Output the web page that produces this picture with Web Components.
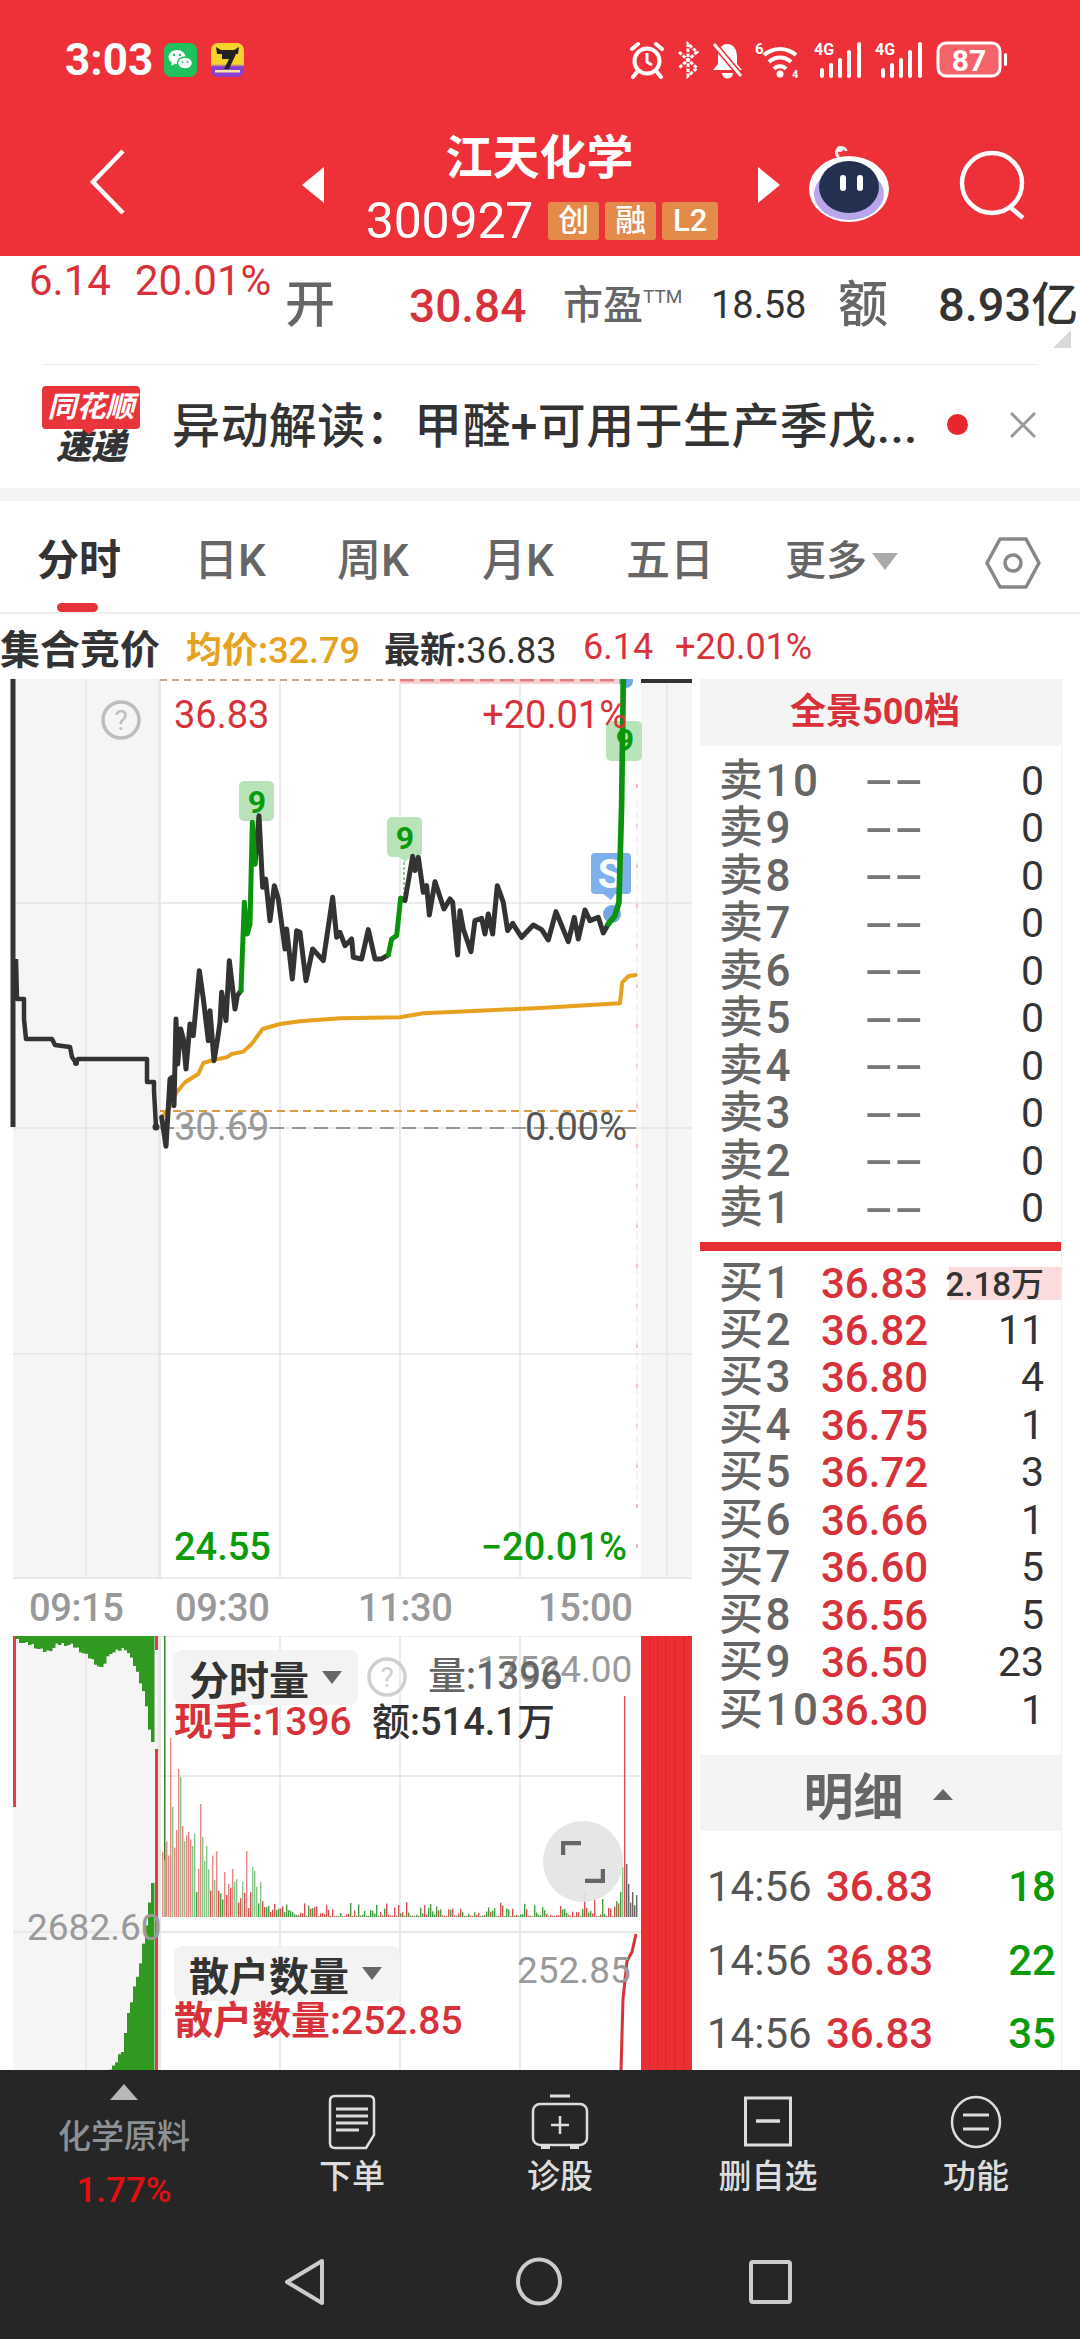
<!DOCTYPE html>
<html lang="zh-CN">
<head>
<meta charset="utf-8">
<style>
  html, body { margin: 0; padding: 0; background: #fff; }
  body {
    width: 1080px;
    height: 2340px;
    overflow: hidden;
    font-family: Roboto, "Noto Sans CJK SC", sans-serif;
    color: #333;
    display: flex;
    flex-direction: column;
  }
  .main { display: flex; height: 1391px; }
</style>
</head>
<body>
  <stock-header></stock-header>
  <quote-strip></quote-strip>
  <news-row></news-row>
  <period-tabs></period-tabs>
  <chart-info></chart-info>
  <div class="main">
    <time-chart></time-chart>
    <order-book></order-book>
  </div>
  <bottom-bar></bottom-bar>

<script>
class StatusBar extends HTMLElement {
  constructor() {
    super();
    this.attachShadow({ mode: 'open' });
  }

  connectedCallback() {
    this.shadowRoot.innerHTML = `
      <style>
        :host { display: flex; align-items: center; height: 120px; padding: 0 72px 0 65px; color: #fff; }
        .time { font-size: 44px; font-weight: 700; width: 88px; letter-spacing: 0; }
        .left { display: flex; align-items: center; gap: 14px; }
        .left .time { margin-right: -3px; }
        .right { margin-left: auto; display: flex; align-items: center; gap: 11px; }
        svg { display: block; }
        text { font-family: Roboto, sans-serif; font-weight: 700; fill: #fff; }
      </style>
      <div class="left">
        <span class="time">3:03</span>
        <svg width="33" height="34" viewBox="0 0 33 34">
          <rect width="33" height="34" rx="7" fill="#1fc15c"/>
          <ellipse cx="13" cy="14" rx="8.5" ry="7" fill="#fff"/>
          <ellipse cx="21" cy="20" rx="7.5" ry="6" fill="#fff" stroke="#1fc15c" stroke-width="1.5"/>
          <path d="M8 19l-1 4 4-2z" fill="#fff"/>
          <circle cx="10" cy="12" r="1.2" fill="#1fc15c"/><circle cx="16" cy="12" r="1.2" fill="#1fc15c"/>
          <circle cx="18.5" cy="19" r="1" fill="#1fc15c"/><circle cx="23.5" cy="19" r="1" fill="#1fc15c"/>
        </svg>
        <svg width="33" height="34" viewBox="0 0 33 34">
          <defs><linearGradient id="ap" x1="0" y1="0" x2="0" y2="1"><stop offset=".62" stop-color="#f8d22c"/><stop offset=".7" stop-color="#8a3fd0"/></linearGradient></defs>
          <rect width="33" height="34" rx="7" fill="url(#ap)"/>
          <path d="M5 4l5 3h13l5-3-1 7H6z" fill="#222"/>
          <path d="M11 11h14l-7 15h-5l5-10h-7z" fill="#222"/>
          <rect x="4" y="27" width="25" height="2.5" fill="#f3e3a0"/>
        </svg>
      </div>
      <div class="right">
        <svg width="36" height="38" viewBox="0 0 36 38" fill="none" stroke="#fff" stroke-width="4">
          <circle cx="18" cy="20" r="12.5"/><path d="M18 12v9l5 3" stroke-width="3"/>
          <path d="M3 8l6-5M33 8l-6-5M8 31l-4 5M28 31l4 5" stroke-linecap="round"/>
        </svg>
        <svg width="24" height="38" viewBox="0 0 24 38" fill="none" stroke="#fff" stroke-width="3">
          <path d="M3 11l18 16-9 8V3l9 8L3 27" stroke-dasharray="3.5 1.5"/>
        </svg>
        <svg width="33" height="38" viewBox="0 0 33 38" fill="#fff">
          <path d="M16 3c7 0 10 6 10 13v7l5 6H2l5-6v-7C7 9 10 3 16 3z"/>
          <path d="M11 32h11a5.5 5.5 0 0 1-11 0z"/>
          <path d="M3 3l27 32" stroke="#ee3039" stroke-width="6"/>
          <path d="M3 3l27 32" stroke="#fff" stroke-width="3"/>
        </svg>
        <svg width="48" height="38" viewBox="0 0 48 38" fill="none" stroke="#fff" stroke-width="4">
          <text x="0" y="13" font-size="15" stroke="none">6</text>
          <path d="M9 14a24 24 0 0 1 32 0M14 21a16 16 0 0 1 22 0M19 28a8 8 0 0 1 12 0"/>
          <circle cx="25" cy="33" r="3.5" fill="#fff" stroke="none"/>
          <text x="37" y="37" font-size="11" stroke="none">4</text>
        </svg>
        <signal-mark></signal-mark>
        <signal-mark></signal-mark>
        <svg width="72" height="38" viewBox="0 0 72 38">
          <rect x="2" y="2" width="62" height="33" rx="8" fill="#f4636a" stroke="#fff" stroke-width="3"/>
          <text x="33" y="30" font-size="30" text-anchor="middle">87</text>
          <rect x="68" y="12" width="3" height="13" rx="1.5" fill="#fff"/>
        </svg>
      </div>
    `;
  }
}

class SignalMark extends HTMLElement {
  constructor() {
    super();
    this.attachShadow({ mode: 'open' });
  }

  connectedCallback() {
    this.shadowRoot.innerHTML = `
      <style>
        :host { display: block; }
        svg { display: block; }
        text { font-family: Roboto, sans-serif; font-weight: 700; fill: #fff; }
      </style>
      <svg width="50" height="38" viewBox="0 0 50 38" fill="#fff">
        <text x="0" y="14" font-size="16">4G</text>
        <rect x="6" y="27" width="4" height="10" rx="2"/>
        <rect x="15" y="22" width="4" height="15" rx="2"/>
        <rect x="24" y="17" width="4" height="20" rx="2"/>
        <rect x="33" y="9" width="4" height="28" rx="2"/>
        <rect x="43" y="1" width="4" height="36" rx="2"/>
      </svg>
    `;
  }
}

class StockHeader extends HTMLElement {
  constructor() {
    super();
    this.attachShadow({ mode: 'open' });
  }

  connectedCallback() {
    this.shadowRoot.innerHTML = `
      <style>
        :host { display: block; height: 256px; background: #ee3039; color: #fff; }
        .nav { display: flex; height: 136px; padding-left: 88px; }
        svg { display: block; }
        .back { margin-top: 29px; }
        .prev { margin: 47px 0 0 175px; }
        .next { margin: 47px 0 0 0; }
        .name { width: 432px; display: flex; flex-direction: column; align-items: center; }
        .title { font-size: 47px; font-weight: 700; line-height: 50px; margin-top: 13px; padding-right: 3px; }
        .code { display: flex; align-items: center; height: 40px; margin-top: 18px; padding-left: 2px; }
        .num { font-size: 50px; line-height: 40px; letter-spacing: -.2px; }
        .tags { display: flex; gap: 6px; margin-left: 15px; }
        .tag { width: 51px; height: 38px; border-radius: 3px; background: #e28b4b; font-size: 31px; font-weight: 500; line-height: 38px; text-align: center; }
        .tag.wide { width: 56px; }
        .robot { margin: 24px 0 0 26px; }
        .search { margin: 30px 0 0 68px; }
      </style>
      <status-bar></status-bar>
      <div class="nav">
        <svg class="back" width="38" height="66" viewBox="0 0 38 66" fill="none" stroke="#fff" stroke-width="4.5"><path d="M35 2L5 33l30 31"/></svg>
        <svg class="prev" width="24" height="36" viewBox="0 0 24 36" fill="#fff"><path d="M23 0v36L1 18z"/></svg>
        <div class="name">
          <div class="title">江天化学</div>
          <div class="code">
            <span class="num">300927</span>
            <div class="tags">
              <span class="tag">创</span><span class="tag">融</span><span class="tag wide">L2</span>
            </div>
          </div>
        </div>
        <svg class="next" width="24" height="36" viewBox="0 0 24 36" fill="#fff"><path d="M1 0v36l22-18z"/></svg>
        <svg class="robot" width="84" height="78" viewBox="0 0 84 78">
          <path d="M32 13c-4-2-3-8 1-9 3-1 6 1 6 3" fill="none" stroke="#f3e8ef" stroke-width="3"/>
          <circle cx="33" cy="5" r="3" fill="#fff"/>
          <ellipse cx="42" cy="45" rx="40" ry="33" fill="#fff"/>
          <ellipse cx="42" cy="50" rx="35" ry="26" fill="#b9a6ea"/>
          <ellipse cx="42" cy="43" rx="30" ry="26" fill="#24304f"/>
          <rect x="33" y="31" width="6" height="16" rx="3" fill="#fff"/>
          <rect x="50" y="31" width="6" height="16" rx="3" fill="#fff"/>
        </svg>
        <svg class="search" width="68" height="70" viewBox="0 0 68 70" fill="none" stroke="#fff" stroke-width="4.5">
          <circle cx="33" cy="33" r="30"/><path d="M50 56l14 12"/>
        </svg>
      </div>
    `;
  }
}

class QuoteStrip extends HTMLElement {
  constructor() {
    super();
    this.attachShadow({ mode: 'open' });
  }

  connectedCallback() {
    this.shadowRoot.innerHTML = `
      <style>
        :host { display: block; position: relative; height: 109px; overflow: hidden; background: #fff; }
        .row {
          display: grid; grid-template-columns: 106px 152px 122px 154px 148px 129px 98px 142px;
          padding-left: 29px; height: 108px; align-items: start; white-space: nowrap;
        }
        .chg { font-size: 42px; line-height: 48px; color: #d8313a; margin-top: 1px; }
        .k { font-size: 40px; line-height: 50px; color: #666; margin-top: 25px; font-weight: 500; }
        .k sup { font-size: 19px; line-height: 0; font-weight: 400; vertical-align: 16px; }
        .open { font-size: 50px; margin-top: 24px; margin-left: -2px; }
        .v { font-size: 38px; line-height: 50px; margin-top: 24px; color: #333; }
        .red { color: #d8313a; font-size: 46px; font-weight: 500; margin-top: 25px; }
        .amt { font-size: 47px; font-weight: 500; margin-top: 24px; }
        .corner { position: absolute; left: 1053px; top: 74px; width: 0; height: 0; border-left: 18px solid transparent; border-bottom: 18px solid #d9d9d9; }
        .rule { height: 1px; margin: 0 42px; background: #eee; }
      </style>
      <div class="row">
        <span class="chg">6.14</span>
        <span class="chg">20.01%</span>
        <span class="k open">开</span>
        <span class="v red">30.84</span>
        <span class="k">市盈<sup>TTM</sup></span>
        <span class="v">18.58</span>
        <span class="k open">额</span>
        <span class="v amt">8.93亿</span>
      </div>
      <div class="rule"></div>
      <div class="corner"></div>
    `;
  }
}

class NewsRow extends HTMLElement {
  constructor() {
    super();
    this.attachShadow({ mode: 'open' });
  }

  connectedCallback() {
    this.shadowRoot.innerHTML = `
      <style>
        :host { display: flex; align-items: center; height: 123px; padding-left: 42px; background: #fff; border-bottom: 13px solid #f4f4f4; }
        .logo { width: 98px; display: flex; flex-direction: column; align-items: center; margin-top: -1px; }
        .flag { width: 98px; height: 43px; background: #e8343a; border-radius: 4px; color: #fff; font-size: 29px; font-weight: 700; font-style: italic; line-height: 43px; text-align: center; position: relative; }
        .flag::after { content: ""; position: absolute; left: 40px; top: 42px; border: 7px solid transparent; border-top-color: #e8343a; border-bottom: 0; }
        .sub { font-size: 35px; font-weight: 900; font-style: italic; color: #333; line-height: 36px; margin-top: 1px; }
        .text { margin-left: 32px; width: 743px; font-size: 48px; font-weight: 500; white-space: nowrap; color: #333; line-height: 56px; letter-spacing: .4px; }
        .dot { width: 21px; height: 21px; border-radius: 50%; background: #e8262d; margin-left: 32px; margin-top: -4px; flex: none; }
        svg { display: block; margin-left: 42px; margin-top: -4px; flex: none; }
      </style>
      <div class="logo"><div class="flag">同花顺</div><div class="sub">速递</div></div>
      <div class="text">异动解读：甲醛+可用于生产季戊...</div>
      <div class="dot"></div>
      <svg width="26" height="26" viewBox="0 0 26 26" stroke="#999" stroke-width="3"><path d="M1 1l24 24M25 1L1 25"/></svg>
    `;
  }
}

class PeriodTabs extends HTMLElement {
  constructor() {
    super();
    this.attachShadow({ mode: 'open' });
  }

  connectedCallback() {
    this.shadowRoot.innerHTML = `
      <style>
        :host { display: grid; grid-template-columns: 157px 143px 145px 144px 159px 200px 1fr; height: 111px; padding-left: 37px; background: #fff; border-bottom: 2px solid #eee; box-sizing: content-box; }
        .tab { display: flex; flex-direction: column; font-size: 44px; line-height: 50px; color: #666; font-weight: 500; padding-top: 35px; white-space: nowrap; }
        .on { color: #333; font-weight: 700; font-size: 42px; }
        .bar { width: 41px; height: 9px; margin: 17px 0 0 20px; border-radius: 5px; background: #e8323a; }
        .more { display: flex; flex-direction: row; align-items: flex-start; gap: 5px; font-size: 41px; }
        .more i { margin-top: 17px; border: 13px solid transparent; border-top: 17px solid #aaa; border-bottom: 0; }
        svg { display: block; margin-top: 36px; }
      </style>
      <div class="tab on">分时<div class="bar"></div></div>
      <div class="tab">日K</div>
      <div class="tab">周K</div>
      <div class="tab">月K</div>
      <div class="tab">五日</div>
      <div class="tab more">更多<i></i></div>
      <svg width="56" height="52" viewBox="0 0 56 52" fill="none" stroke="#888" stroke-width="3.5">
        <path d="M15 2h26l13 24-13 24H15L2 26z" stroke-linejoin="round"/><circle cx="28" cy="26" r="8"/>
      </svg>
    `;
  }
}

class ChartInfo extends HTMLElement {
  constructor() {
    super();
    this.attachShadow({ mode: 'open' });
  }

  connectedCallback() {
    this.shadowRoot.innerHTML = `
      <style>
        :host { display: grid; grid-template-columns: 186px 198px 199px 92px 1fr; align-items: center; height: 65px; background: #fff; white-space: nowrap; font-size: 36px; }
        .title { font-size: 40px; font-weight: 700; color: #333; }
        b { font-weight: 700; }
        .avg { color: #e6a21f; font-weight: 500; }
        .last { color: #333; }
        .red { color: #d8313a; }
      </style>
      <span class="title">集合竞价</span>
      <span class="avg"><b>均价:</b>32.79</span>
      <span class="last"><b>最新:</b>36.83</span>
      <span class="red">6.14</span>
      <span class="red">+20.01%</span>
    `;
  }
}

class TimeChart extends HTMLElement {
  constructor() {
    super();
    this.attachShadow({ mode: 'open' });
  }

  connectedCallback() {
    this.shadowRoot.innerHTML = `
      <style>
        :host { display: flex; flex-direction: column; width: 700px; flex: none; }
      </style>
      <price-pane></price-pane>
      <time-axis></time-axis>
      <volume-pane></volume-pane>
    `;
  }
}

class PricePane extends HTMLElement {
  constructor() {
    super();
    this.attachShadow({ mode: 'open' });
  }

  connectedCallback() {
    // points below are traced on a 3x crop with origin 140,740, hence the scale on the group
    const lead = '65,1135 78,1222 90,1020 97,1015 102,1100 108,840 113,975 122,870 130,900 138,990 150,855 160,890 178,695 190,780 205,905 210,815 222,965 232,905 240,850 245,760 258,845 268,665 285,810 292,770 303,755';
    const up1 = '303,755 313,490 322,585 330,555 337,250 345,375';
    const mid1 = '345,375 357,230 368,445 377,420 390,545 403,440 415,480 435,630 440,570 457,720 470,575 480,580 498,725 518,630 550,665 578,475 590,595 600,580 615,620 635,600 640,655 665,660 685,572 705,660 725,660 745,648';
    const up2 = '745,648 755,600 770,590 782,478';
    const mid2 = '782,478 795,485 818,352 825,395 835,355 850,460 860,440 868,528 885,428 912,510 930,480 938,490 953,648 960,515 970,570 993,638 1005,545 1025,538 1035,585 1045,525 1058,585 1072,440 1090,490 1103,575 1118,553 1145,595 1180,558 1205,572 1225,603 1248,518 1285,608 1303,535 1315,600 1335,513 1350,545 1375,535 1390,582 1405,555';
    const up3 = '1405,555 1425,530 1437,490 1445,200 1450,-180';
    const avg = '65,1135 90,1105 110,1060 135,1030 175,1005 190,972 220,963 260,955 275,945 310,938 335,915 368,870 420,855 480,847 600,838 780,835 850,823 1000,816 1200,807 1440,793 1447,730 1465,712 1487,708';
    const pre = '16,960 17,1000 24,1000 24,1020 26,1040 52,1040 55,1046 70,1048 72,1058 76,1064 78,1060 147,1060 147,1083 154,1083 154,1092 156,1128';

    const grid = [86, 280, 400, 520, 667].map(x => `<path d="M${x} 680V1580"/>`).join('');
    const rows = [904, 1129, 1355, 1579].map(y => `<path d="M13 ${y}H692"/>`).join('');

    this.shadowRoot.innerHTML = `
      <style>
        :host { display: block; position: relative; height: 900px; }
        svg { display: block; }
        .lb { position: absolute; font-size: 38px; line-height: 38px; white-space: nowrap; }
        .red { color: #d8313a; }
        .green { color: #0a9a0a; font-weight: 500; }
        .gray { color: #9a9a9a; }
        .dark { color: #555; }
        .right { text-align: right; width: 160px; }
        .nine { font: 700 32px Roboto, sans-serif; fill: #0a9a0a; text-anchor: middle; }
        .ess { font: 700 40px Roboto, sans-serif; fill: #fff; text-anchor: middle; }
      </style>
      <svg width="700" height="900" viewBox="0 680 700 900">
        <rect x="13" y="680" width="147" height="900" fill="#f5f5f5"/>
        <rect x="641" y="680" width="51" height="900" fill="#f5f5f5"/>
        <rect x="158" y="680" width="3" height="900" fill="#e8e8e8"/>
        <g stroke="#e4e4e4" stroke-width="1.5" fill="none">${grid}${rows}</g>
        <rect x="400" y="679" width="224" height="6" fill="#f6d3d3"/>
        <path d="M160 681H400" stroke="#c9a98a" stroke-width="2" stroke-dasharray="7 5"/>
        <path d="M400 681H622" stroke="#e27d7d" stroke-width="3" stroke-dasharray="14 6"/>
        <rect x="641" y="680" width="51" height="4" fill="#333"/>
        <path d="M160 1112H641" stroke="#d99a4a" stroke-width="2" stroke-dasharray="8 5"/>
        <path d="M160 1129H641" stroke="#999" stroke-width="2" stroke-dasharray="14 8"/>
        <path d="M637 785V1580" stroke="#f3bcbc" stroke-width="2" stroke-dasharray="4 36"/>
        <path d="M637 800V1500" stroke="#f8dede" stroke-width="1" stroke-dasharray="8 4"/>
        <path d="M13 680V1128" stroke="#333" stroke-width="5"/>
        <polyline points="${pre}" fill="none" stroke="#333" stroke-width="4.5" stroke-linejoin="round"/>
        <circle cx="156" cy="1128" r="3.5" fill="#333"/>
        <circle cx="76" cy="1064" r="3" fill="#333"/>
        <path d="M404 858V900" stroke="#2b9a2b" stroke-width="1" stroke-dasharray="3 2"/>

        <rect x="239" y="782" width="35" height="40" rx="5" fill="#b9e3b9"/>
        <path d="M250 821l7 6 7-6z" fill="#b9e3b9"/>
        <text class="nine" x="257" y="814">9</text>
        <rect x="387" y="818" width="35" height="40" rx="5" fill="#b9e3b9"/>
        <path d="M398 857l7 6 7-6z" fill="#b9e3b9"/>
        <text class="nine" x="405" y="850">9</text>
        <rect x="606" y="722" width="36" height="40" rx="5" fill="#b9e3b9"/>
        <text class="nine" x="625" y="752">9</text>
        <circle cx="612" cy="915" r="9" fill="#6ea6e8"/>
        <circle cx="626" cy="682" r="7" fill="#6ea6e8"/>
        <rect x="591" y="854" width="40" height="41" rx="4" fill="#7fb0ee"/>
        <path d="M602 894l9 7 5-7z" fill="#7fb0ee"/>
        <text class="ess" x="610" y="889">S</text>

        <g transform="translate(140 740) scale(.3333)" fill="none" stroke-width="15" stroke-linejoin="round" stroke-linecap="round">
          <polyline points="${avg}" stroke="#e6a21f" stroke-width="12"/>
          <polyline points="${lead}" stroke="#333"/>
          <polyline points="${mid1}" stroke="#333"/>
          <polyline points="${mid2}" stroke="#333"/>
          <polyline points="${up1}" stroke="#0c930c"/>
          <polyline points="${up2}" stroke="#0c930c"/>
          <polyline points="${up3}" stroke="#0c930c" stroke-width="17"/>
        </g>
      </svg>
      <svg style="position:absolute;left:101px;top:21px" width="40" height="40" viewBox="0 0 40 40">
        <circle cx="20" cy="20" r="18" fill="none" stroke="#bdbdbd" stroke-width="3.5"/>
        <text x="20" y="30" font-size="28" fill="#bdbdbd" text-anchor="middle" font-family="Roboto">?</text>
      </svg>
      <span class="lb red" style="left:174px;top:17px">36.83</span>
      <span class="lb red right" style="left:467px;top:17px">+20.01%</span>
      <span class="lb gray" style="left:174px;top:429px">30.69</span>
      <span class="lb dark right" style="left:467px;top:429px">0.00%</span>
      <span class="lb green" style="left:174px;top:849px">24.55</span>
      <span class="lb green right" style="left:467px;top:849px">−20.01%</span>
    `;
  }
}

class TimeAxis extends HTMLElement {
  constructor() {
    super();
    this.attachShadow({ mode: 'open' });
  }

  connectedCallback() {
    this.shadowRoot.innerHTML = `
      <style>
        :host { display: grid; grid-template-columns: 146px 183px 180px 1fr; align-items: center; height: 57px; padding-left: 29px; background: #fff; color: #999; font-size: 38px; font-weight: 500; letter-spacing: -.4px; }
      </style>
      <span>09:15</span><span>09:30</span><span>11:30</span><span>15:00</span>
    `;
  }
}

class VolumePane extends HTMLElement {
  constructor() {
    super();
    this.attachShadow({ mode: 'open' });
  }

  // thin volume bars, the loud ones are pinned, the rest follows a decay with a small generator
  bars() {
    const base = 1918;
    const pinned = { 170: 179, 172: 110, 178: 148, 180: 140, 182: 91, 184: 76, 200: 113, 202: 80, 206: 71, 224: 45, 232: 48, 246: 66, 252: 50, 254: 46, 260: 35, 584: 24, 594: 20, 602: 18, 620: 25, 622: 50, 624: 221, 626: 53, 628: 33, 632: 25, 636: 22 };
    let seed = 17;
    let out = '';
    for (let x = 162; x < 637; x += 2) {
      seed = (seed * 137 + 29) % 1009;
      const r = seed / 1009;
      let h;
      if (x < 196) h = 45 + r * 60;
      else if (x < 220) h = 22 + r * 45;
      else if (x < 264) h = 8 + r * 30;
      else if (x < 290) h = 4 + r * 10;
      else h = 1 + r * r * r * 14;
      if (x > 612) h = 10 + r * 8;
      if (pinned[x]) h = pinned[x];
      const red = seed % 2 === 0;
      const tall = h > 30;
      const color = red ? (tall ? '#e98686' : '#d65050') : (tall ? '#86c686' : '#3f9f3f');
      out += `<rect x="${x}" y="${(base - h).toFixed(1)}" width="1.4" height="${h.toFixed(1)}" fill="${x > 624 ? '#666' : x === 624 ? '#e05050' : color}"/>`;
    }
    return out;
  }

  // stepped green fund-flow columns of the auction part, read off two outlines
  flow() {
    const at = (pts, x) => {
      for (let i = 1; i < pts.length; i++) {
        if (x <= pts[i][0]) {
          const [x0, y0] = pts[i - 1];
          const [x1, y1] = pts[i];
          return y0 + (y1 - y0) * (x - x0) / (x1 - x0);
        }
      }
      return pts[pts.length - 1][1];
    };
    const top = [[16, 1640], [31, 1645], [45, 1652], [56, 1644], [69, 1644], [83, 1653], [100, 1668], [109, 1652], [125, 1648], [134, 1667], [143, 1693], [150, 1743], [154, 1743]];
    const low = [[108, 2071], [121, 2053], [127, 2013], [138, 1970], [143, 1937], [150, 1893], [154, 1857]];
    let seed = 5;
    let out = '';
    for (let x = 16; x < 154; x += 3) {
      seed = (seed * 71 + 13) % 211;
      const h = at(top, x) + (seed % 7) - 3 - 1637;
      out += `<rect x="${x}" y="1637" width="3.5" height="${Math.max(h, 2).toFixed(1)}" fill="#2f9a1f"/>`;
      if (x >= 108) {
        const y = at(low, x) + (seed % 5) - 2;
        out += `<rect x="${x}" y="${y.toFixed(1)}" width="3.5" height="${(2071 - y).toFixed(1)}" fill="#2f9a1f"/>`;
      }
    }
    return out;
  }

  connectedCallback() {
    const grid = [280, 400, 520].map(x => `<path d="M${x} 1637V2071"/>`).join('');
    const stripes = [649, 657, 665, 674, 683].map(x => `<rect x="${x}" y="1637" width="1.5" height="434" fill="#d92c2c"/>`).join('');

    this.shadowRoot.innerHTML = `
      <style>
        :host { display: block; position: relative; height: 434px; overflow: hidden; }
        svg { display: block; }
        .lb { position: absolute; font-size: 38px; line-height: 38px; white-space: nowrap; }
        .gray { color: #9a9a9a; }
        .mute { color: #666; font-weight: 500; }
        .red { color: #d8313a; font-weight: 500; font-size: 39px; }
        .dark { color: #333; font-weight: 500; }
        b { font-weight: 700; }
        .pick { position: absolute; left: 174px; display: flex; align-items: center; height: 55px; padding-left: 15px; border-radius: 8px; background: #f3f3f3; color: #333; font-size: 40px; font-weight: 700; box-sizing: border-box; white-space: nowrap; }
        .pick i { margin-left: 13px; border: 10px solid transparent; border-top: 13px solid #666; border-bottom: 0; }
        .zoom { position: absolute; left: 543px; top: 185px; width: 80px; height: 81px; border-radius: 50%; background: rgba(228,228,228,.92); display: flex; align-items: center; justify-content: center; }
      </style>
      <svg width="700" height="434" viewBox="0 1637 700 434">
        <rect x="13" y="1637" width="145" height="434" fill="#f5f5f5"/>
        <g stroke="#e4e4e4" stroke-width="1.5" fill="none">
          <path d="M86 1637V2071"/>${grid}
          <path d="M160 1777H641"/>
        </g>
        <path d="M13 1933H641" stroke="#e9e9e9" stroke-width="2.5"/>
        <path d="M160 1637H641" stroke="#eee" stroke-width="2"/>
        <rect x="158" y="1637" width="3" height="434" fill="#e8e8e8"/>
        ${this.flow()}
        <rect x="13" y="1637" width="3" height="171" fill="#dc3f44"/>
        <rect x="155" y="1637" width="3" height="14" fill="#dc3f44"/>
        <rect x="155" y="1750" width="3" height="321" fill="#dc3f44"/>
        <rect x="164" y="1637" width="1.5" height="281" fill="#2f8a2f"/>
        ${this.bars()}
        <rect x="641" y="1637" width="51" height="434" fill="#ec2f33"/>
        ${stripes}
        <path d="M621 2071L623 2000 627 1962 632 1953 636 1935" fill="none" stroke="#d8313a" stroke-width="3"/>
      </svg>
      <span class="lb gray" style="left:27px;top:273px;font-size:37px">2682.60</span>
      <span class="lb gray" style="left:477px;top:15px;font-size:37px">17524.00</span>
      <div class="pick" style="top:14px;width:184px">分时量<i></i></div>
      <svg style="position:absolute;left:367px;top:21px" width="40" height="40" viewBox="0 0 40 40">
        <circle cx="20" cy="20" r="18" fill="none" stroke="#cfcfcf" stroke-width="3.5"/>
        <text x="20" y="30" font-size="28" fill="#cfcfcf" text-anchor="middle" font-family="Roboto">?</text>
      </svg>
      <span class="lb mute" style="left:428px;top:21px">量:1396</span>
      <span class="lb red" style="left:174px;top:67px"><b>现手:</b>1396</span>
      <span class="lb dark" style="left:372px;top:67px">额:514.1万</span>
      <div class="pick" style="top:310px;width:226px">散户数量<i></i></div>
      <span class="lb gray" style="left:517px;top:316px;font-size:37px">252.85</span>
      <span class="lb red" style="left:174px;top:366px"><b>散户数量:</b>252.85</span>
      <div class="zoom">
        <svg width="44" height="42" viewBox="0 0 44 42" fill="none" stroke="#666" stroke-width="4.5">
          <path d="M2 14V2H20M42 28V40H24"/>
        </svg>
      </div>
    `;
  }
}

class OrderBook extends HTMLElement {
  constructor() {
    super();
    this.attachShadow({ mode: 'open' });
  }

  connectedCallback() {
    const sell = [10, 9, 8, 7, 6, 5, 4, 3, 2, 1].map(n => `
      <div class="row"><span class="lab">卖${n}</span><span class="dash"><i>--</i></span><span class="vol">0</span></div>`).join('');
    const buy = [
      [1, '36.83', '<span class="top">2.18万</span>'], [2, '36.82', '11'], [3, '36.80', '4'], [4, '36.75', '1'], [5, '36.72', '3'],
      [6, '36.66', '1'], [7, '36.60', '5'], [8, '36.56', '5'], [9, '36.50', '23'], [10, '36.30', '1']
    ].map(r => `
      <div class="row buy"><span class="lab">买${r[0]}</span><span class="price">${r[1]}</span><span class="vol">${r[2]}</span></div>`).join('');
    const ticks = ['18', '22', '35'].map(v => `
      <div class="tick"><span class="t">14:56</span><span class="price">36.83</span><span class="g">${v}</span></div>`).join('');

    this.shadowRoot.innerHTML = `
      <style>
        :host { display: block; width: 361px; height: 1391px; overflow: hidden; border-right: 1px solid #eee; background: #fff; }
        .full { height: 67px; background: #f4f4f4; color: #d8313a; font-size: 36px; font-weight: 700; line-height: 67px; text-align: center; padding-right: 11px; }
        .sell { padding-top: 11px; }
        .row { display: grid; grid-template-columns: 102px 122px 1fr; height: 47.5px; line-height: 47.5px; padding: 0 17px 0 19px; font-size: 42px; align-items: center; white-space: nowrap; position: relative; }
        .lab { color: #666; font-weight: 500; font-size: 44px; letter-spacing: 2.5px; }
        .dash { padding-left: 43px; color: #777; }
        .dash i { display: inline-block; font-style: normal; font-size: 40px; font-weight: 500; transform: scaleX(2.2); transform-origin: left center; }
        .vol { text-align: right; color: #333; font-size: 41px; }
        .price { color: #d8313a; font-weight: 500; }
        .sep { height: 9px; margin-top: 10px; background: #e42f33; }
        .buys { padding-top: 8px; }
        .top { font-size: 33px; font-weight: 500; position: relative; z-index: 1; }
        .pink { position: absolute; left: 249px; right: 0; top: 8px; height: 33px; background: #fadcdc; }
        .title { display: flex; align-items: center; justify-content: center; gap: 29px; height: 76px; margin-top: 21px; background: #f4f4f4; color: #666; font-size: 50px; font-weight: 700; padding-right: 5px; }
        .title i { border: 10px solid transparent; border-bottom: 11px solid #666; border-top: 0; margin-top: 2px; }
        .ticks { padding-top: 19px; }
        .tick { display: grid; grid-template-columns: 119px 1fr auto; height: 73.5px; line-height: 73.5px; padding: 0 5px 0 7px; font-size: 42px; white-space: nowrap; }
        .t { color: #555; }
        .g { color: #0a9a0a; font-weight: 500; }
      </style>
      <div class="full">全景500档</div>
      <div class="sell">${sell}</div>
      <div class="sep"></div>
      <div class="buys">${buy}</div>
      <div class="title">明细<i></i></div>
      <div class="ticks">${ticks}</div>
    `;
    this.shadowRoot.querySelector('.buy').insertAdjacentHTML('afterbegin', '<div class="pink"></div>');
  }
}

class BottomBar extends HTMLElement {
  constructor() {
    super();
    this.attachShadow({ mode: 'open' });
  }

  connectedCallback() {
    this.shadowRoot.innerHTML = `
      <style>
        :host { display: flex; flex-direction: column; height: 269px; background: #262626; }
        .tools { display: grid; grid-template-columns: 248px 208px 208px 208px 208px; height: 160px; }
        .sector { display: flex; flex-direction: column; align-items: center; }
        .up { margin-top: 14px; border: 14px solid transparent; border-bottom: 16px solid #b8b8b8; border-top: 0; }
        .name { margin-top: 17px; font-size: 33px; line-height: 40px; color: #8c9196; font-weight: 500; }
        .pct { margin-top: 14px; font-size: 35px; line-height: 40px; color: #e01010; font-weight: 500; }
        .tool { display: flex; flex-direction: column; align-items: center; color: #ddd; font-size: 33px; font-weight: 500; line-height: 40px; padding-top: 24px; }
        .tool svg { display: block; height: 56px; margin-bottom: 7px; }
        .keys { display: flex; justify-content: center; align-items: center; gap: 0; height: 109px; padding-top: 0; }
        .keys svg { display: block; }
      </style>
      <div class="tools">
        <div class="sector"><i class="up"></i><span class="name">化学原料</span><span class="pct">1.77%</span></div>
        <div class="tool">
          <svg width="48" height="56" viewBox="0 0 48 56" fill="none" stroke="#ddd" stroke-width="2.5">
            <path d="M7 2h34q5 0 5 5v34l-8 13H7q-5 0-5-5V7q0-5 5-5z"/>
            <path d="M8 15h32M8 22h32M8 29h32M8 36h23" stroke-width="3"/>
          </svg>
          下单
        </div>
        <div class="tool">
          <svg width="58" height="56" viewBox="0 0 58 56" fill="none" stroke="#ddd" stroke-width="2.5">
            <path d="M19 2h20" stroke-width="3"/>
            <rect x="2" y="10" width="54" height="41" rx="7"/>
            <path d="M29 22v18M20 31h18"/>
            <path d="M10 52h9v3h-9zM39 52h9v3h-9z" fill="#ddd" stroke="none"/>
          </svg>
          诊股
        </div>
        <div class="tool">
          <svg width="48" height="56" viewBox="0 0 48 56" fill="none" stroke="#ddd" stroke-width="3">
            <rect x="1.5" y="4" width="45" height="47"/>
            <path d="M12 27h24" stroke-width="3.5"/>
          </svg>
          删自选
        </div>
        <div class="tool">
          <svg width="52" height="56" viewBox="0 0 52 56" fill="none" stroke="#ddd" stroke-width="2.5">
            <ellipse cx="26" cy="28" rx="24" ry="25"/>
            <path d="M13 21h26M13 35h26" stroke-width="3"/>
          </svg>
          功能
        </div>
      </div>
      <div class="keys">
        <svg width="41" height="48" viewBox="0 0 41 48" fill="none" stroke="#ccc" stroke-width="4" stroke-linejoin="round" style="margin:-6px 0 0 -5px"><path d="M38 3v42L3 24z"/></svg>
        <svg width="48" height="49" viewBox="0 0 48 49" fill="none" stroke="#ccc" stroke-width="4" style="margin:-6px 0 0 190px"><ellipse cx="24" cy="24.5" rx="21" ry="22"/></svg>
        <svg width="43" height="44" viewBox="0 0 43 44" fill="none" stroke="#ccc" stroke-width="4" style="margin:-6px 0 0 186px"><rect x="2" y="2" width="39" height="40" rx="2"/></svg>
      </div>
    `;
  }
}

customElements.define('signal-mark', SignalMark);
customElements.define('status-bar', StatusBar);
customElements.define('stock-header', StockHeader);
customElements.define('quote-strip', QuoteStrip);
customElements.define('news-row', NewsRow);
customElements.define('period-tabs', PeriodTabs);
customElements.define('chart-info', ChartInfo);
customElements.define('time-chart', TimeChart);
customElements.define('price-pane', PricePane);
customElements.define('time-axis', TimeAxis);
customElements.define('volume-pane', VolumePane);
customElements.define('order-book', OrderBook);
customElements.define('bottom-bar', BottomBar);
</script>
</body>
</html>
